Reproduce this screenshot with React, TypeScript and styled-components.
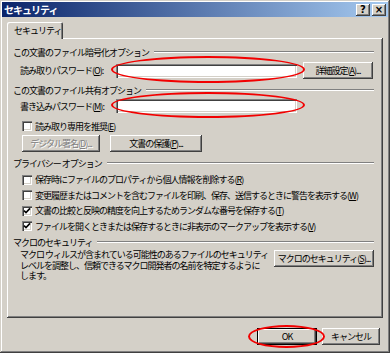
import React from 'react';
import styled, { createGlobalStyle, css } from 'styled-components';

const Global = createGlobalStyle`
  html, body { margin: 0; padding: 0; background: #d4d0c8; }
  body { font-family: "Noto Sans CJK JP", "Noto Sans", sans-serif; }
  * { box-sizing: border-box; }
`;

const raised = css`
  box-shadow: inset -1px -1px #404040, inset 1px 1px #ffffff, inset -2px -2px #808080, inset 2px 2px #d4d0c8;
`;

const Window = styled.div`
  width: 390px;
  height: 353px;
  background: #d4d0c8;
  box-shadow: inset -1px -1px #404040, inset 1px 1px #d4d0c8, inset -2px -2px #808080, inset 2px 2px #ffffff;
  padding: 2px;
  display: flex;
  flex-direction: column;
  font-size: 9px;
  letter-spacing: -1px;
  color: #000;
  line-height: 1;
`;

const TitleBar = styled.div`
  height: 15px;
  flex: none;
  background: linear-gradient(to right, #0a246a, #a6caf0);
  display: flex;
  align-items: center;
  justify-content: space-between;
  padding: 0 2px 0 2px;
`;

const TitleText = styled.span`
  color: #fff;
  font-weight: bold;
  font-size: 10px;
`;

const TitleButtons = styled.div`
  display: flex;
  gap: 2px;
`;

const TitleButton = styled.div`
  width: 14px;
  height: 12px;
  background: #d4d0c8;
  ${raised};
  display: flex;
  align-items: center;
  justify-content: center;
  font-family: "DejaVu Sans", sans-serif;
  font-weight: bold;
  font-size: 10px;
  letter-spacing: 0;
`;

const Body = styled.div`
  flex: 1;
  display: flex;
  flex-direction: column;
  padding: 5px 5px 0 5px;
`;

const TabStrip = styled.div`
  height: 16px;
  display: flex;
  position: relative;
  z-index: 1;
`;

const Tab = styled.div`
  width: 56px;
  height: 17px;
  background: #d4d0c8;
  box-shadow: inset 1px 1px #ffffff, inset -1px 0 #404040, inset -2px 0 #808080;
  border-radius: 2px 2px 0 0;
  display: flex;
  align-items: center;
  padding-left: 7px;
  padding-bottom: 1px;
`;

const Panel = styled.div`
  width: 376px;
  height: 280px;
  flex: none;
  background: #d4d0c8;
  ${raised};
  padding: 7px 9px 0 6px;
  display: flex;
  flex-direction: column;
`;

const GroupHeading = styled.div<{ $mt: number }>`
  display: flex;
  align-items: center;
  gap: 5px;
  height: 14px;
  margin-top: ${p => p.$mt}px;
  white-space: nowrap;
  &::after {
    content: '';
    flex: 1;
    height: 0;
    border-top: 1px solid #808080;
    border-bottom: 1px solid #ffffff;
  }
`;

const FieldRow = styled.div<{ $mt: number; $h: number }>`
  display: flex;
  align-items: center;
  height: ${p => p.$h}px;
  margin-top: ${p => p.$mt}px;
  padding-left: 7px;
`;

const FieldLabel = styled.span`
  width: 96px;
  flex: none;
  white-space: nowrap;
`;

const InputWrap = styled.div`
  position: relative;
  width: 181px;
  height: 14px;
  flex: none;
`;

const TextInput = styled.div`
  width: 100%;
  height: 100%;
  background: #fff;
  box-shadow: inset 1px 1px #808080, inset 2px 2px #404040, inset -1px -1px #ffffff, inset -2px -2px #d4d0c8;
`;

const Ellipse = styled.div<{ $t: number; $b: number; $l: number; $r: number }>`
  position: absolute;
  top: ${p => p.$t}px;
  bottom: ${p => p.$b}px;
  left: ${p => p.$l}px;
  right: ${p => p.$r}px;
  border: 2.5px solid #f20000;
  border-radius: 50%;
  pointer-events: none;
  z-index: 2;
`;

const Button = styled.button<{ $w: number; $default?: boolean }>`
  width: ${p => p.$w}px;
  height: 17px;
  flex: none;
  background: #d4d0c8;
  border: none;
  padding: 0;
  margin: 0;
  font: inherit;
  letter-spacing: inherit;
  color: #000;
  display: flex;
  align-items: center;
  justify-content: center;
  white-space: nowrap;
  ${raised};
  ${p => p.$default && css`
    box-shadow: inset 0 0 0 1px #000000, inset -2px -2px #404040, inset 2px 2px #ffffff, inset -3px -3px #808080;
  `}
  &:disabled {
    color: #808080;
    text-shadow: 1px 1px #ffffff;
  }
`;

const SideButton = styled(Button)`
  margin-left: 6px;
`;

const CheckRow = styled.div<{ $mt: number; $h: number }>`
  display: flex;
  align-items: center;
  gap: 3px;
  height: ${p => p.$h}px;
  margin-top: ${p => p.$mt}px;
  padding-left: 9px;
  white-space: nowrap;
`;

const Box = styled.span`
  width: 10px;
  height: 10px;
  flex: none;
  background: #fff;
  box-shadow: inset 1px 1px #808080, inset 2px 2px #404040, inset -1px -1px #ffffff, inset -2px -2px #d4d0c8;
  display: flex;
  align-items: center;
  justify-content: center;
`;

const ButtonRow = styled.div`
  display: flex;
  gap: 10px;
  height: 17px;
  margin-top: 2px;
  padding-left: 9px;
`;

const MacroRow = styled.div`
  display: flex;
  justify-content: space-between;
  align-items: flex-start;
  margin-top: 1px;
  padding-left: 7px;
`;

const Para = styled.p`
  margin: 0;
  line-height: 10.5px;
  white-space: nowrap;
`;

const Footer = styled.div`
  display: flex;
  justify-content: flex-end;
  gap: 5px;
  margin-top: 10px;
  padding-right: 3px;
`;

const OkWrap = styled.div`
  position: relative;
`;

const Check = () => (
  <svg width="8" height="8" viewBox="0 0 8 8">
    <path d="M1 3.6 L3 5.6 L7 1.4" fill="none" stroke="#000" strokeWidth="1.6" />
  </svg>
);

const CheckItem = ({ checked, mt, children }: { checked?: boolean; mt: number; children: React.ReactNode }) => (
  <CheckRow $mt={mt} $h={15.5}>
    <Box>{checked && <Check />}</Box>
    <span>{children}</span>
  </CheckRow>
);

export default function App() {
  return (
    <>
      <Global />
      <Window>
        <TitleBar>
          <TitleText>セキュリティ</TitleText>
          <TitleButtons>
            <TitleButton>?</TitleButton>
            <TitleButton>×</TitleButton>
          </TitleButtons>
        </TitleBar>
        <Body>
          <TabStrip>
            <Tab>セキュリティ</Tab>
          </TabStrip>
          <Panel>
            <GroupHeading $mt={0}>この文書のファイル暗号化オプション</GroupHeading>
            <FieldRow $mt={3} $h={17}>
              <FieldLabel>読み取りパスワード(<u>O</u>):</FieldLabel>
              <InputWrap>
                <TextInput />
                <Ellipse $t={-8} $b={-5} $l={-5} $r={-8} />
              </InputWrap>
              <SideButton $w={70}>詳細設定(<u>A</u>)...</SideButton>
            </FieldRow>
            <GroupHeading $mt={4}>この文書のファイル共有オプション</GroupHeading>
            <FieldRow $mt={1} $h={16}>
              <FieldLabel>書き込みパスワード(<u>M</u>):</FieldLabel>
              <InputWrap>
                <TextInput />
                <Ellipse $t={-7} $b={-5} $l={-5} $r={-8} />
              </InputWrap>
            </FieldRow>
            <CheckRow $mt={5} $h={14}>
              <Box />
              <span>読み取り専用を推奨(<u>E</u>)</span>
            </CheckRow>
            <ButtonRow>
              <Button $w={78} disabled>デジタル署名(<u>D</u>)...</Button>
              <Button $w={92}>文書の保護(<u>P</u>)...</Button>
            </ButtonRow>
            <GroupHeading $mt={4}>プライバシー オプション</GroupHeading>
            <CheckItem mt={2}>保存時にファイルのプロパティから個人情報を削除する(<u>R</u>)</CheckItem>
            <CheckItem mt={0}>変更履歴またはコメントを含むファイルを印刷、保存、送信するときに警告を表示する(<u>W</u>)</CheckItem>
            <CheckItem mt={0} checked>文書の比較と反映の精度を向上するためランダムな番号を保存する(<u>T</u>)</CheckItem>
            <CheckItem mt={0} checked>ファイルを開くときまたは保存するときに非表示のマークアップを表示する(<u>V</u>)</CheckItem>
            <GroupHeading $mt={1}>マクロのセキュリティ</GroupHeading>
            <MacroRow>
              <Para>
                マクロ ウィルスが含まれている可能性のあるファイルのセキュリティ<br />
                レベルを調整し、信頼できるマクロ開発者の名前を特定するように<br />
                します。
              </Para>
              <Button $w={100}>マクロのセキュリティ(<u>S</u>)...</Button>
            </MacroRow>
          </Panel>
          <Footer>
            <OkWrap>
              <Button $w={60} $default>OK</Button>
              <Ellipse $t={-3} $b={-3} $l={-9} $r={-8} />
            </OkWrap>
            <Button $w={58}>キャンセル</Button>
          </Footer>
        </Body>
      </Window>
    </>
  );
}
